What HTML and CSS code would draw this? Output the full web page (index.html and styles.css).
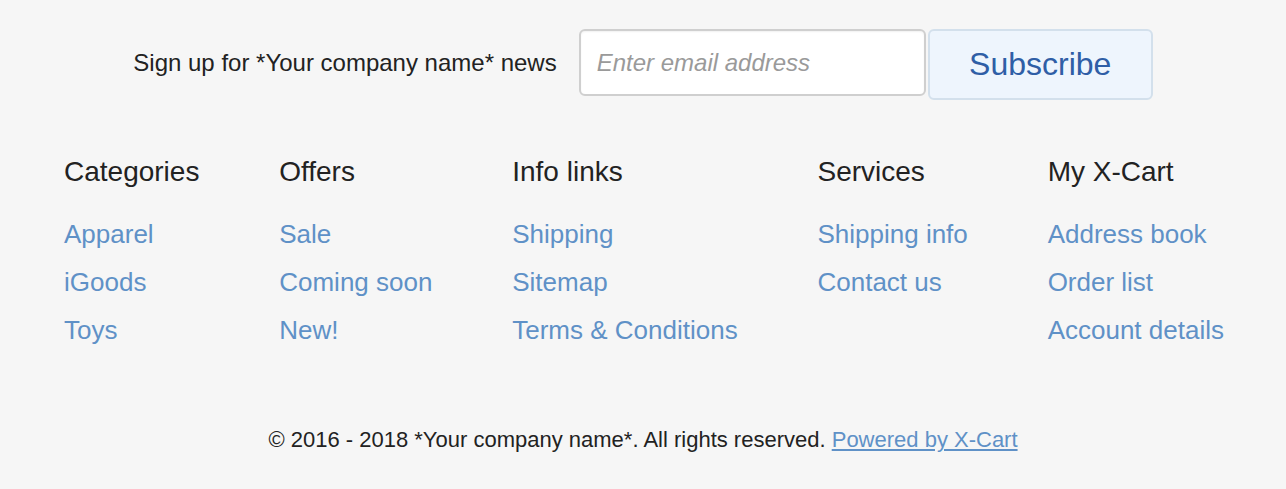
FILE: index.html
```html
<!DOCTYPE html>
<html lang="en">
<head>
<meta charset="utf-8">
<title>Footer</title>
<link rel="stylesheet" href="styles.css">
</head>
<body>
<footer class="footer">
  <form class="signup">
    <label class="signup-label" for="email">Sign up for *Your company name* news</label>
    <input class="signup-input" id="email" type="text" placeholder="Enter email address">
    <button class="signup-btn" type="button">Subscribe</button>
  </form>

  <nav class="columns">
    <div class="col">
      <h3 class="col-title">Categories</h3>
      <ul class="col-list">
        <li><a href="#">Apparel</a></li>
        <li><a href="#">iGoods</a></li>
        <li><a href="#">Toys</a></li>
      </ul>
    </div>
    <div class="col">
      <h3 class="col-title">Offers</h3>
      <ul class="col-list">
        <li><a href="#">Sale</a></li>
        <li><a href="#">Coming soon</a></li>
        <li><a href="#">New!</a></li>
      </ul>
    </div>
    <div class="col">
      <h3 class="col-title">Info links</h3>
      <ul class="col-list">
        <li><a href="#">Shipping</a></li>
        <li><a href="#">Sitemap</a></li>
        <li><a href="#">Terms &amp; Conditions</a></li>
      </ul>
    </div>
    <div class="col">
      <h3 class="col-title">Services</h3>
      <ul class="col-list">
        <li><a href="#">Shipping info</a></li>
        <li><a href="#">Contact us</a></li>
      </ul>
    </div>
    <div class="col">
      <h3 class="col-title">My X-Cart</h3>
      <ul class="col-list">
        <li><a href="#">Address book</a></li>
        <li><a href="#">Order list</a></li>
        <li><a href="#">Account details</a></li>
      </ul>
    </div>
  </nav>

  <p class="copyright">© 2016 - 2018 *Your company name*. All rights reserved. <a class="powered" href="#">Powered by X-Cart</a></p>
</footer>
</body>
</html>
```

FILE: styles.css
```css
html, body {
  margin: 0;
  padding: 0;
  background: #f6f6f6;
}

body {
  font-family: "Liberation Sans", Arial, Helvetica, sans-serif;
  color: #222;
}

.footer {
  padding-top: 29px;
}

.signup {
  display: flex;
  justify-content: center;
  align-items: flex-start;
  margin: 0;
}

.signup-label {
  font-size: 24px;
  line-height: 68px;
  color: #222;
  margin-right: 22px;
}

.signup-input {
  box-sizing: border-box;
  width: 347px;
  height: 67px;
  border: 2px solid #cfcfcf;
  border-radius: 6px;
  background: #fff;
  box-shadow: inset 0 1px 2px rgba(0,0,0,0.06);
  padding: 0 16px;
  font-family: "Liberation Sans", Arial, sans-serif;
  font-size: 24px;
  color: #333;
  outline: none;
}

.signup-input::placeholder {
  color: #9a9a9a;
  font-style: italic;
}

.signup-btn {
  box-sizing: border-box;
  width: 225px;
  height: 71px;
  margin-left: 2px;
  border: 2px solid #d3e0ec;
  border-radius: 6px;
  background: #eef5fd;
  color: #2f5ea6;
  font-family: "Liberation Sans", Arial, sans-serif;
  font-size: 32px;
  padding: 0;
  cursor: pointer;
}

.columns {
  display: flex;
  justify-content: space-between;
  padding: 0 62px 0 64px;
  margin-top: 57px;
}

.col-title {
  margin: 0;
  font-size: 28px;
  font-weight: normal;
  line-height: 30px;
  color: #222;
}

.col-list {
  list-style: none;
  margin: 23px 0 0;
  padding: 0;
}

.col-list li {
  font-size: 26px;
  line-height: 48px;
}

.col-list a {
  color: #5f91c7;
  text-decoration: none;
}

.copyright {
  margin: 71px 0 0;
  text-align: center;
  font-size: 22px;
  line-height: 30px;
  color: #222;
}

.powered {
  color: #5f91c7;
  text-decoration: underline;
}
```
